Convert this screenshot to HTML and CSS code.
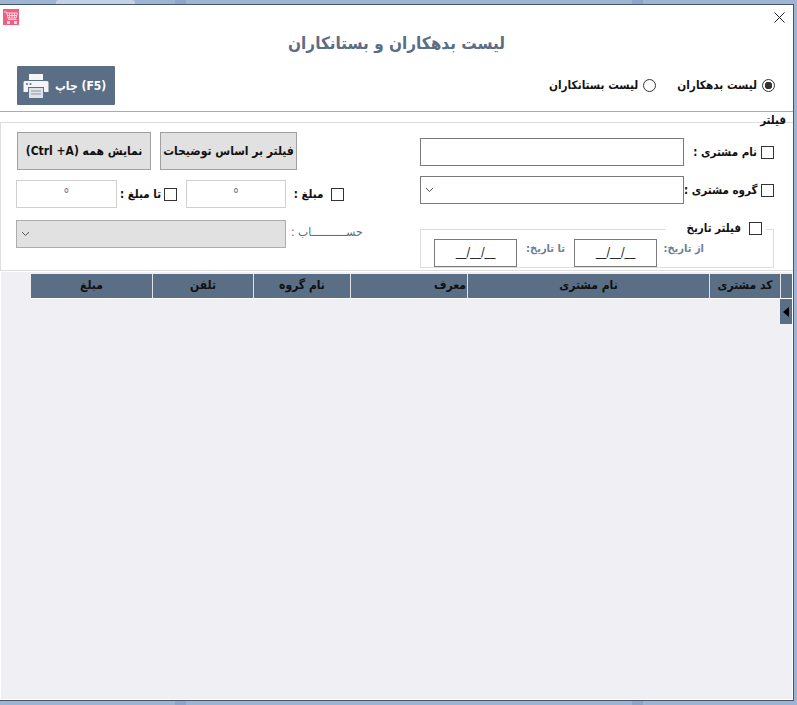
FILE: index.html
```html
<!DOCTYPE html>
<html lang="fa">
<head>
<meta charset="utf-8">
<title>لیست بدهکاران و بستانکاران</title>
<link rel="stylesheet" href="styles.css">
</head>
<body>
<div class="desk-top"><span class="desk-tab"></span></div>
<main class="window">
  <div class="titlebar">
    <svg class="app-icon" width="16" height="16" viewBox="0 0 16 16">
      <rect width="16" height="16" fill="#ee5f80"/>
      <path d="M1 3h2.500l2 7.500h8M4 4h10.500l-1.500 5H5.500M6.500 4v5M9 4v5M11.500 4v5M4.500 6.500h9.500" fill="none" stroke="#fbd5de" stroke-width="1"/>
      <rect x="4" y="12" width="3" height="3" fill="#fbd5de"/><rect x="11" y="12" width="3" height="3" fill="#fbd5de"/>
    </svg>
    <svg class="close" width="11" height="11" viewBox="0 0 11 11"><path d="M.5 .5l10 10M10.500 .5l-10 10" stroke="#222" stroke-width="1" fill="none"/></svg>
  </div>
  <h1 class="title" dir="rtl">لیست بدهکاران و بستانکاران</h1>
  <div class="toolbar">
    <button class="print" type="button">
      <svg width="26" height="26" viewBox="0 0 26 26">
        <path d="M6 1h14v6H6z" fill="#f3f5f7"/>
        <path d="M2 8h22a1.500 1.500 0 0 1 1.500 1.500V19H21v-5H5v5H.5V9.500A1.500 1.500 0 0 1 2 8z" fill="#f3f5f7"/>
        <path d="M6 15h14v10H6z" fill="#dfe3e8"/>
        <path d="M8 18h10M8 21h10" stroke="#8a99aa" stroke-width="1"/>
        <circle cx="4" cy="11" r="1" fill="#5a6e85"/><circle cx="7.500" cy="11" r="1" fill="#5a6e85"/>
      </svg>
      <span dir="rtl"><bdi>(F5)</bdi> چاپ</span>
    </button>
    <div class="radios">
      <label class="radio" dir="rtl"><span class="radio-mark"></span>لیست بستانکاران</label>
      <label class="radio" dir="rtl"><span class="radio-mark on"></span>لیست بدهکاران</label>
    </div>
  </div>
  <fieldset class="filter">
    <legend class="filter-legend" dir="rtl">فیلتر</legend>
    <div class="filter-left">
      <div class="buttons">
        <button class="btn btn-all" type="button" dir="rtl">نمایش همه <bdi>(Ctrl +A)</bdi></button>
        <button class="btn btn-notes" type="button" dir="rtl">فیلتر بر اساس توضیحات</button>
      </div>
      <div class="amounts">
        <div class="num">°</div>
        <span class="lbl lbl-to" dir="rtl">تا مبلغ :</span>
        <span class="check"></span>
        <div class="num num-from">°</div>
        <span class="lbl lbl-from" dir="rtl">مبلغ :</span>
        <span class="check"></span>
      </div>
      <div class="account">
        <div class="combo combo-off"><svg width="9" height="6" viewBox="0 0 9 6"><path d="M1 1l3.500 3.500L8 1" fill="none" stroke="#555"/></svg></div>
        <span class="account-lbl" dir="rtl">حســـــــــــاب :</span>
      </div>
    </div>
    <div class="filter-right">
      <div class="field">
        <div class="box"></div>
        <span class="lbl lbl-name" dir="rtl">نام مشتری :</span>
        <span class="check"></span>
      </div>
      <div class="field">
        <div class="combo combo-on"><svg width="9" height="6" viewBox="0 0 9 6"><path d="M1 1l3.500 3.500L8 1" fill="none" stroke="#555"/></svg></div>
        <span class="lbl lbl-group" dir="rtl">گروه مشتری :</span>
        <span class="check"></span>
      </div>
      <fieldset class="dates">
        <legend class="dates-legend"><span class="lbl" dir="rtl">فیلتر تاریخ</span><span class="check"></span></legend>
        <div class="date">__/__/__</div>
        <span class="date-lbl date-lbl-to" dir="rtl">تا تاریخ:</span>
        <div class="date">__/__/__</div>
        <span class="date-lbl date-lbl-from" dir="rtl">از تاریخ:</span>
      </fieldset>
    </div>
  </fieldset>
  <section class="grid">
    <div class="grid-head">
      <div class="cell" dir="rtl">مبلغ</div>
      <div class="cell" dir="rtl">تلفن</div>
      <div class="cell" dir="rtl">نام گروه</div>
      <div class="cell cell-start" dir="rtl">معرف</div>
      <div class="cell" dir="rtl">نام مشتری</div>
      <div class="cell" dir="rtl">کد مشتری</div>
      <div class="cell"></div>
    </div>
    <div class="row-mark"><span class="arrow"></span></div>
  </section>
</main>
</body>
</html>
```
FILE: styles.css
```css
* { box-sizing: border-box; }
html, body { height: 100%; }
body {
  margin: 0;
  width: 797px;
  height: 705px;
  overflow: hidden;
  background: linear-gradient(90deg, #9db4d2 0 175px, #8ca6cb 175px 186px, #9db4d2 186px 632px, #8ca6cb 632px 643px, #9db4d2 643px);
  font-family: "DejaVu Sans Condensed", "DejaVu Sans", sans-serif;
  color: #111;
}
.desk-top { height: 4px; padding-left: 56px; }
.desk-tab { display: block; width: 79px; height: 4px; background: #c3d3e6; border-radius: 3px 3px 0 0; }
.window {
  width: 794px;
  height: 697px;
  border: 1px solid #47566a;
  border-width: 1px 1px 1px 0;
  background: #fff;
  display: flex;
  flex-direction: column;
}
.titlebar { height: 26px; display: flex; justify-content: space-between; align-items: flex-start; padding: 4px 8px 0 3px; flex: none; }
.app-icon { display: block; }
.close { margin-top: 3px; }
.title {
  margin: 0;
  height: 28px;
  flex: none;
  text-align: center;
  font-size: 17px;
  line-height: 24px;
  font-weight: bold;
  color: #5a6e85;
}
.toolbar {
  height: 53px;
  flex: none;
  padding: 7px 18px 0 17px;
  display: flex;
  justify-content: space-between;
  align-items: flex-start;
  border-bottom: 1px solid #a9a9a9;
}
.print {
  width: 98px;
  height: 39px;
  margin: 0;
  padding: 0 0 0 6px;
  border: 0;
  border-radius: 1px;
  background: #5a6e85;
  color: #fff;
  font: bold 12px "DejaVu Sans Condensed", "DejaVu Sans", sans-serif;
  display: flex;
  align-items: center;
  gap: 6px;
}
.radios { display: flex; gap: 21px; margin-top: 11px; }
.radio { display: flex; align-items: center; gap: 5px; font-size: 11.700px; font-weight: bold; height: 16px; white-space: nowrap; }
.radio-mark { width: 13px; height: 13px; border: 1px solid #333; border-radius: 50%; background: #fff; flex: none; }
.radio-mark.on { background: radial-gradient(circle, #333 0 3.500px, #fff 4px); }
.filter {
  margin: 10px 0 0;
  padding: 0;
  height: 149px;
  flex: none;
  min-width: 0;
  position: relative;
  display: flex;
  justify-content: space-between;
  border: 1px solid #dedede;
  border-right: 0;
}
.filter-legend {
  position: absolute;
  right: 7px;
  top: -10px;
  padding: 0;
  font-size: 11.500px;
  font-weight: bold;
  line-height: 15px;
}
.lbl { font-size: 11.500px; font-weight: bold; white-space: nowrap; line-height: 16px; }
.filter-left { width: 345px; flex: none; padding: 9px 0 0 15px; display: flex; flex-direction: column; }
.buttons { display: flex; gap: 9px; margin-left: 1px; }
.btn {
  height: 38px;
  padding: 0;
  border: 1px solid #a0a0a0;
  background: #e1e1e1;
  color: #111;
  font: bold 12px "DejaVu Sans Condensed", "DejaVu Sans", sans-serif;
  white-space: nowrap;
}
.btn-all { width: 134px; }
.btn-notes { width: 137px; }
.amounts { display: flex; align-items: center; margin-top: 10px; height: 28px; }
.num {
  flex: none;
  width: 101px;
  height: 28px;
  border: 1px solid #d0d0d0;
  text-align: center;
  line-height: 27px;
  font-size: 14px;
  color: #777;
}
.num-from { width: 100px; margin-left: 9px; }
.lbl-to { flex: none; width: 47px; text-align: center; }
.lbl-from { flex: none; width: 45px; text-align: center; }
.check { display: block; width: 13px; height: 13px; border: 1px solid #333; background: #fff; flex: none; }
.account { display: flex; align-items: center; margin-top: 12px; }
.combo { display: flex; align-items: center; padding-left: 4px; height: 28px; flex: none; }
.combo-off { width: 270px; background: #e1e1e1; border: 1px solid #adadad; }
.combo-on { width: 264px; border: 1px solid #7a7a7a; background: #fff; }
.account-lbl { margin-left: 5px; font-size: 12px; color: #5a6e85; white-space: nowrap; margin-top: -4px; }
.filter-right { width: 373px; flex: none; padding: 15px 19px 0 0; display: flex; flex-direction: column; align-items: flex-end; }
.field { display: flex; align-items: center; height: 28px; width: 354px; margin-bottom: 10px; flex: none; }
.box { width: 264px; height: 28px; border: 1px solid #7a7a7a; background: #fff; flex: none; }
.field .lbl { flex: 1; text-align: right; padding-right: 4px; }
.dates {
  margin: 15px 0 0;
  padding: 9px 16px 0 13px;
  width: 354px;
  height: 39px;
  flex: none;
  border: 1px solid #dedede;
  display: flex;
  align-items: flex-start;
  position: relative;
  min-width: 0;
}
.dates-legend {
  position: absolute;
  right: 7px;
  top: -11px;
  padding: 0 4px 0 20px;
  margin: 0;
  background: #fff;
  display: flex;
  align-items: center;
  gap: 8px;
  height: 18px;
}
.date {
  width: 83px;
  height: 28px;
  border: 1px solid #7a7a7a;
  background: #fff;
  text-align: center;
  font-size: 12px;
  line-height: 24px;
  flex: none;
}
.date-lbl { font-size: 11px; font-weight: bold; color: #6b7f99; width: 57px; text-align: center; white-space: nowrap; margin-top: 3px; }
.date-lbl-from { width: 41px; text-align: right; margin-left: 6px; }
.grid {
  flex: 1;
  background: #f0eff4;
  padding: 2px 0 0 30px;
  border: 1px solid #fff;
  display: flex;
  flex-direction: column;
}
.grid-head {
  display: grid;
  grid-template-columns: 121px 101px 97px 117px 242px 71px 12px;
  height: 25px;
  flex: none;
  background: #5a6e85;
  border-bottom: 1px solid #fff;
}
.cell {
  color: #111;
  font-size: 12px;
  font-weight: bold;
  text-align: center;
  line-height: 22px;
  border-left: 1px solid #dfe3e8;
  white-space: nowrap;
}
.cell:first-child { border-left: 0; }
.cell-start { text-align: right; padding-right: 1px; }
.row-mark {
  align-self: flex-end;
  width: 12px;
  height: 25px;
  background: #5a6e85;
  display: flex;
  align-items: center;
  justify-content: center;
}
.arrow { width: 0; height: 0; border: 5px solid transparent; border-left-width: 0; border-right: 6px solid #000; }
```
